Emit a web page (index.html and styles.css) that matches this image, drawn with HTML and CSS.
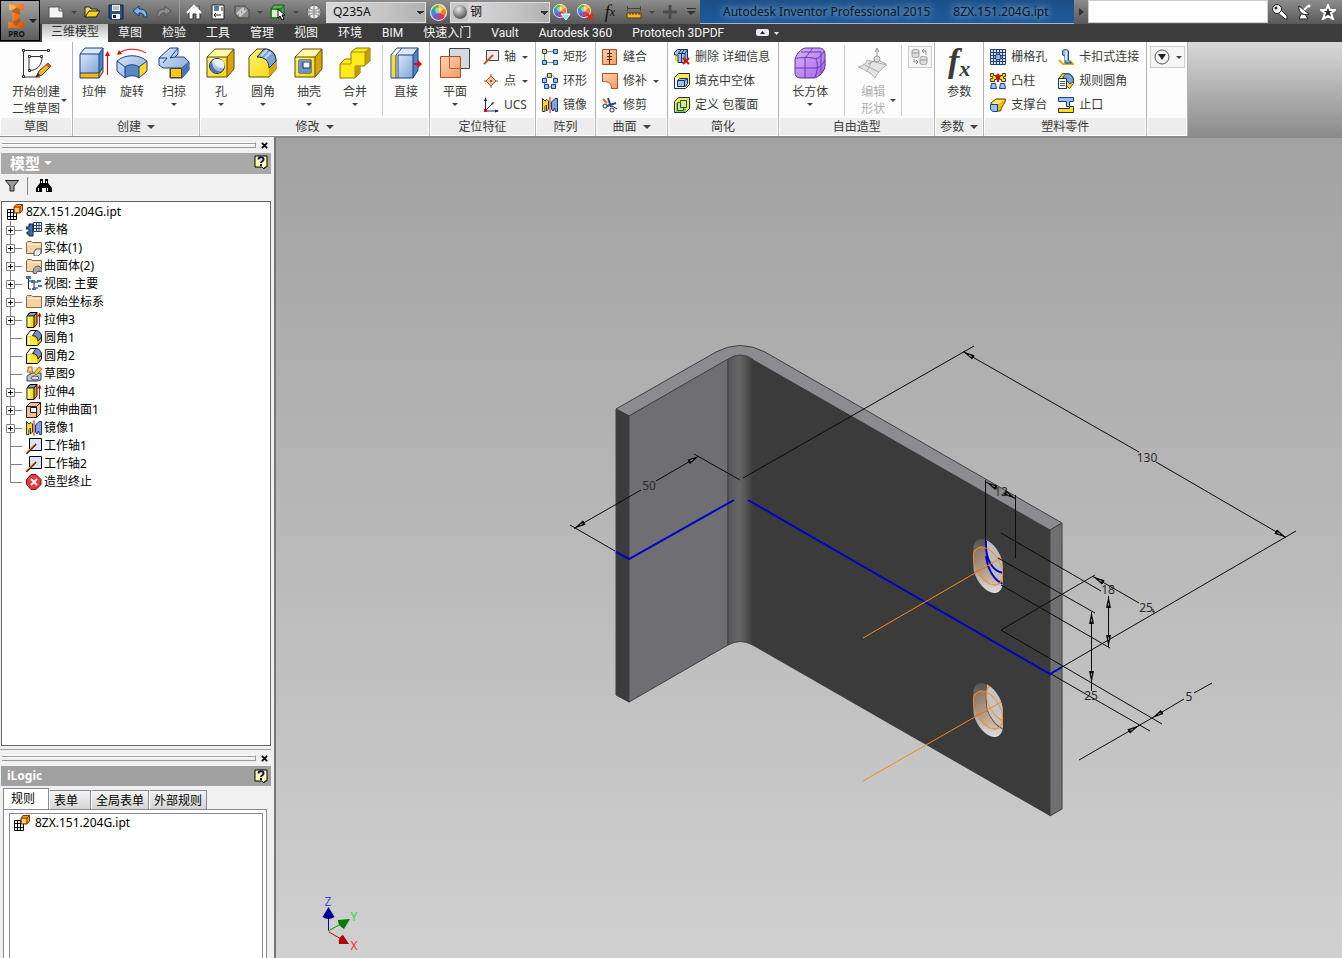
FILE: index.html
```html
<!DOCTYPE html>
<html lang="zh-CN">
<head>
    <meta charset="utf-8">
    <title>Autodesk Inventor Professional 2015</title>
    <link rel="stylesheet" href="styles.css">
</head>
<body>
<!-- Shared gradients and symbols -->
<svg class="defs" width="0" height="0" aria-hidden="true">
    <defs>
        <linearGradient id="gBlue" x1="0" y1="0" x2="1" y2="1"><stop offset="0" stop-color="#dbe8f8"/><stop offset="1" stop-color="#7ea3d6"/></linearGradient>
        <linearGradient id="gYel" x1="0" y1="0" x2="1" y2="1"><stop offset="0" stop-color="#fff27a"/><stop offset="1" stop-color="#f8d800"/></linearGradient>
        <linearGradient id="gOrange" x1="0" y1="0" x2="1" y2="1"><stop offset="0" stop-color="#fdd3b4"/><stop offset="1" stop-color="#f79a62"/></linearGradient>
        <linearGradient id="gLogo" x1="0" y1="0" x2="1" y2="1"><stop offset="0" stop-color="#f9a24a"/><stop offset="1" stop-color="#d2560c"/></linearGradient>
        <radialGradient id="gBall" cx=".4" cy=".3" r=".7"><stop offset="0" stop-color="#e8e8e8"/><stop offset="1" stop-color="#555"/></radialGradient>
        <linearGradient id="gPurple" x1="0" y1="0" x2="1" y2="1"><stop offset="0" stop-color="#d9b8ff"/><stop offset="1" stop-color="#a263ec"/></linearGradient>
    </defs>
    <symbol id="cube" viewBox="0 0 32 32">
        <path d="M2 10 10 2h19l-7 8z" fill="#fff9a8"/><path d="M22 10l7-8v20l-7 8z" fill="#d6a50c"/><path d="M2 10h20v20H2z" fill="url(#gYel)"/>
        <path d="M2 10 10 2h19v20l-7 8H2zM2 10h20v20M22 10l7-8" fill="none" stroke="#5c4a10"/>
    </symbol>
    <symbol id="part" viewBox="0 0 16 16">
        <path d="M1 6h9v9H1z" fill="#fff"/><path d="M.5 5.500h9v10h-9zM1 8.500h9M1 12.500h9M3.500 6v9M6.500 6v9" fill="none" stroke="#000"/>
        <path d="M7 3l2-2.500h6.500V6L13 9H7z" fill="#f6a21c" stroke="#8a2f00"/><path d="M7 3h6v6M13 3l2.500-2.500" fill="none" stroke="#8a2f00"/><path d="M8 4h4v4H8z" fill="#ffd27a"/>
    </symbol>
    <symbol id="extr" viewBox="0 0 16 16">
        <path d="M1 4l3-3.500h7V12l-3 3.500H1z" fill="#d8a800" stroke="#000"/><path d="M4 .5h7L8 4H1z" fill="#7a9cc8" stroke="#000"/><path d="M1.500 4.500H8V15H1.500z" fill="#ffe21c"/><path d="M8 4v11" stroke="#000"/><path d="M2 5h2v9H2z" fill="#fff6a0"/>
        <path d="M13.500 15V3" stroke="#c00"/><path d="M11.500 4.500h4l-2-4z" fill="#c00"/>
    </symbol>
    <symbol id="fil" viewBox="0 0 16 16">
        <path d="M.5 6l4-5.500h6l5 4.500v6l-4 4.500H.5z" fill="#e8c000" stroke="#000"/><path d="M1 6l4-5h5L7 5.500z" fill="#fff"/><path d="M6.500 5.500L10 .5c3 0 5.500 3 5.500 6.500L12 11c0-3-2-5.500-5.500-5.500z" fill="#6f93c4" stroke="#222"/><path d="M1 6.500h5.500L11 10v5H1z" fill="#ffe835"/><path d="M2 7h2v7H2z" fill="#fff8a8"/>
    </symbol>
    <symbol id="mir" viewBox="0 0 16 16">
        <path d="M.5 1.500L3 4l2-1.500L6.500 4v8l-2 2V8L3 9.500v5H.5z" fill="#ffdc1c" stroke="#333"/><path d="M15.500 1.500H13L9.500 5v7l1.500 2 1.500-3 1 3.500h2z" fill="#7fa3d8" stroke="#123a78"/><path d="M8 0v16" stroke="#e00"/>
    </symbol>
    <symbol id="axis" viewBox="0 0 16 16">
        <path d="M3.500.5h12v12h-12z" fill="#d8e6f6" stroke="#000"/><path d="M0 16 10 6" stroke="#6b2a00" stroke-width="2"/><path d="M0 15 9 6" stroke="#f98b2f"/>
    </symbol>
    <symbol id="folder" viewBox="0 0 16 16">
        <path d="M.5 2.500l1-1h4l1 1h9v11H.5z" fill="#f4d3a4" stroke="#8a6a3a"/><path d="M1 4.500h14" stroke="#fff0d8"/>
    </symbol>
    <symbol id="wheel" viewBox="0 0 16 16">
        <path d="M8 8V0a8 8 0 0 1 7 4z" fill="#f7c531"/><path d="M8 8l7-4a8 8 0 0 1 0 8z" fill="#f07a2a"/><path d="M8 8l7 4a8 8 0 0 1-7 4z" fill="#d8365c"/><path d="M8 8v8a8 8 0 0 1-7-4z" fill="#7b56c8"/><path d="M8 8l-7 4a8 8 0 0 1 0-8z" fill="#3b8de0"/><path d="M8 8L1 4a8 8 0 0 1 7-4z" fill="#58b84a"/>
        <circle cx="8" cy="8" r="7.500" fill="none" stroke="#e8e8f0"/><circle cx="8" cy="6" r="3" fill="#fff" opacity=".45"/>
    </symbol>
    <symbol id="help" viewBox="0 0 14 15">
        <path d="M1 1h12v11h-2l-1 2-2-2H1z" fill="#ffffb0" stroke="#000"/><path d="M4.500 4.500c0-3 5-3 5 0 0 2-2.500 1.500-2.500 3.500M7 9v2" fill="none" stroke="#101060" stroke-width="2"/>
    </symbol>
    <symbol id="close" viewBox="0 0 8 8"><path d="M1 1l6 6M7 1L1 7" stroke="#000" stroke-width="2"/></symbol>
    <symbol id="plus" viewBox="0 0 9 9"><path d="M.5.5h8v8h-8z" fill="#fff" stroke="#808080"/><path d="M2 4.500h5M4.500 2v5" stroke="#000"/></symbol>
</svg>

<div class="app">
    <header class="top">
        <button class="app-button" aria-label="应用程序菜单">
            <span class="logo">
                <svg width="20" height="26" viewBox="0 0 20 26">
                    <path d="M2 1h15v6h-4v12h4v6H1v-6h4V7H2z" fill="url(#gLogo)"/><path d="M5 7l5-3 3 3v5l-8-3zM5 19l8-4v4l-4 4z" fill="#a8440a" opacity=".6"/><path d="M2 1l8 3-5 3H2z" fill="#ffb566"/>
                </svg>
                PRO
            </span>
            <span class="caret lg"></span>
        </button>
        <div class="top-rows">
            <div class="titlebar">
                <div class="qat">
                    <button class="qi" aria-label="新建"><svg width="16" height="16" viewBox="0 0 16 16"><path d="M1 3h10l4 4v7H1z" fill="#f4f4f4" stroke="#555"/><path d="M11 3v4h4" fill="#ccc" stroke="#555"/></svg></button>
                    <button class="qc" aria-label="新建选项"><span class="caret"></span></button>
                    <button class="qi" aria-label="打开"><svg width="16" height="16" viewBox="0 0 16 16"><path d="M1 13V3h5l1 2h6v3" fill="#f8d868" stroke="#222"/><path d="M1 13l4-6h11l-4 6z" fill="#ffd21c" stroke="#222"/></svg></button>
                    <button class="qi" aria-label="保存"><svg width="16" height="16" viewBox="0 0 16 16"><path d="M1 1h14v14H2l-1-1z" fill="#2d4f8c" stroke="#0b1a3c"/><path d="M4 1h8v6H4zM4 10h8v5H4z" fill="#f2f2f2"/><path d="M5 3h6M5 5h6" stroke="#888"/><path d="M5 11h3v3H5z" fill="#222"/></svg></button>
                    <button class="qi" aria-label="放弃"><svg width="16" height="16" viewBox="0 0 16 16"><path d="M1 7l6-5v3c5 0 8 2 8 8h-3c0-3-2-4-5-4v3z" fill="#7fb4ea" stroke="#12386e"/></svg></button>
                    <button class="qi" aria-label="重做"><svg width="16" height="16" viewBox="0 0 16 16"><path d="M15 7L9 2v3C4 5 1 7 1 13h3c0-3 2-4 5-4v3z" fill="#8a8a8a" stroke="#555"/></svg></button>
                    <span class="qsep"></span>
                    <button class="qi" aria-label="主页"><svg width="16" height="16" viewBox="0 0 16 16"><path d="M3 8v7h4v-5h3v5h4V8L8 3zM11 2h2v5" fill="#fff" stroke="#333"/><path d="M1 9l7-7 7 7" fill="none" stroke="#fff" stroke-width="2"/></svg></button>
                    <button class="qi" aria-label="特性"><svg width="14" height="16" viewBox="0 0 14 16"><path d="M1 1h12v14H1z" fill="#fff" stroke="#222"/><path d="M3 2h5v5H3z" fill="#4a7fc0"/><path d="M10 4h2M10 6h2M4 11h6M3 11l2-2M3 11l2 2" stroke="#222"/></svg></button>
                    <button class="qi" aria-label="更新"><svg width="16" height="16" viewBox="0 0 16 16"><path d="M1 2h10l4 4v8H5l-4-4z" fill="#8c8c8c" stroke="#444"/><path d="M3 10l6-6M6 12l6-6M9 4v4M6 12V8" stroke="#c8c8c8" stroke-width="2"/></svg></button>
                    <button class="qc" aria-label="更新选项"><span class="caret"></span></button>
                    <button class="qi" aria-label="选择"><svg width="16" height="16" viewBox="0 0 16 16"><path d="M1 5l3-4h10v9l-3 4H1z" fill="#4fb84a" stroke="#1c5a18"/><path d="M2 6h8v7H2z" fill="#d8f0d0"/><path d="M1 5h10l3-4M11 5v9" fill="none" stroke="#1c5a18"/><path d="M8 5v9l2-2 2 4 2-1-2-4h3z" fill="#fff" stroke="#000"/></svg></button>
                    <button class="qc" aria-label="选择选项"><span class="caret"></span></button>
                    <button class="qi" aria-label="材料浏览器"><svg width="16" height="16" viewBox="0 0 16 16"><circle cx="8" cy="8" r="7" fill="#e8e8e8" stroke="#555"/><path d="M8 1v14M1 8h14M3 4c4 3 6 3 10 0M3 12c4-3 6-3 10 0M5 2c-3 4-3 8 0 12M11 2c3 4 3 8 0 12" fill="none" stroke="#888"/></svg></button>
                    <select class="combo" aria-label="材料"><option>Q235A</option></select>
                    <button class="qi" aria-label="外观浏览器"><svg width="17" height="17"><use href="#wheel"/></svg></button>
                    <div class="combo-wrap"><svg width="16" height="16" viewBox="0 0 16 16"><path d="M0 0h16v16H0z" fill="#c9c9c9"/><circle cx="8" cy="8" r="7" fill="url(#gBall)"/></svg><select class="combo" aria-label="外观"><option>钢</option></select></div>
                    <button class="qi" aria-label="调整外观"><svg width="18" height="17" viewBox="0 0 18 17"><use href="#wheel" width="14" height="14"/><path d="M8 10h9l-4 6z" fill="#7fe0ff" stroke="#fff"/></svg></button>
                    <button class="qi" aria-label="清除外观"><svg width="18" height="17" viewBox="0 0 18 17"><use href="#wheel" width="14" height="14"/><path d="M10 10l6 6M16 10l-6 6" stroke="#e02818" stroke-width="2"/></svg></button>
                    <button class="qi qfx" aria-label="参数">f<sub>x</sub></button>
                    <button class="qi" aria-label="测量"><svg width="16" height="14" viewBox="0 0 16 14"><path d="M1 3.500h14M1.500 1v5M14.500 1v5" stroke="#444"/><path d="M1 8h14v5H1z" fill="#f6b72c" stroke="#5c3a00"/><path d="M4 8v2M7 8v2M10 8v2M13 8v2" stroke="#5c3a00"/></svg></button>
                    <button class="qc" aria-label="测量选项"><span class="caret"></span></button>
                    <button class="qi" aria-label="添加"><svg width="16" height="16" viewBox="0 0 16 16"><path d="M8 1v14M1 8h14" stroke="#4c4c4c" stroke-width="3"/></svg></button>
                    <button class="qc more" aria-label="自定义快速访问工具栏"><svg width="9" height="8" viewBox="0 0 9 8"><path d="M0 .5h9" stroke="#333"/><path d="M0 3h9L4 7z" fill="#333"/></svg></button>
                </div>
                <div class="title"><span>Autodesk Inventor Professional 2015</span><span>8ZX.151.204G.ipt</span></div>
                <button class="expand" aria-label="展开"><svg width="5" height="8" viewBox="0 0 5 8"><path d="M0 0l5 4-5 4z" fill="#333"/></svg></button>
                <input class="search" type="text" aria-label="搜索帮助">
                <div class="infocenter">
                    <button class="qi" aria-label="登录"><svg width="16" height="16" viewBox="0 0 16 16"><path d="M5 8l8 7h2v-3L8 5z" fill="#fff" stroke="#222"/><circle cx="5" cy="5" r="4.500" fill="#f4f4f4" stroke="#222"/><circle cx="4" cy="4" r="1.500" fill="#333"/></svg></button>
                    <button class="qi" aria-label="通讯中心"><svg width="16" height="16" viewBox="0 0 16 16"><path d="M5 10l-2 5h9l-3-5z" fill="#fff" stroke="#222"/><path d="M3 2c-1 6 4 10 10 8z" fill="#fff" stroke="#222"/><path d="M8 6l4-4" stroke="#fff" stroke-width="2"/><circle cx="13" cy="2" r="1.500" fill="#fff"/></svg></button>
                    <button class="qi" aria-label="收藏夹"><svg width="16" height="16" viewBox="0 0 16 16"><path d="M8 1l2 5h5l-4 3 2 6-5-3-5 3 2-6-4-3h5z" fill="#333" stroke="#fff" stroke-width="2"/></svg></button>
                </div>
            </div>
            <nav class="tabs">
                <a class="tab active" href="#">三维模型</a><a class="tab" href="#">草图</a><a class="tab" href="#">检验</a><a class="tab" href="#">工具</a><a class="tab" href="#">管理</a><a class="tab" href="#">视图</a><a class="tab" href="#">环境</a><a class="tab" href="#">BIM</a><a class="tab" href="#">快速入门</a><a class="tab" href="#">Vault</a><a class="tab" href="#">Autodesk 360</a><a class="tab" href="#">Prototech 3DPDF</a>
                <button class="tab-min" aria-label="最小化功能区"><svg width="24" height="8" viewBox="0 0 24 8"><rect width="13" height="7" rx="2" fill="#e8e8f4"/><path d="M4 5h5L6.500 2z" fill="#222"/><path d="M18 3h5l-2.500 3z" fill="#e8e8f4"/></svg></button>
            </nav>
        </div>
    </header>

    <div class="ribbon">
        <section class="panel">
            <div class="panel-body">
                <button class="big w72"><svg width="32" height="32" viewBox="0 0 32 32"><path d="M29 3.500H3.500V30H20M9 9.500h13c0 8-4 14-13 14z" fill="none" stroke="#333"/><path d="M2.500 2.500h2v2h-2zM27.500 2.500h2v2h-2zM2.500 28.500h2v2h-2zM8.500 8.500h2v2h-2zM20.500 8.500h2v2h-2zM8.500 22.500h2v2h-2z" fill="#fff" stroke="#333"/><path d="M16 30l3-6 9-8 3 3-9 9z" fill="#f6b52c" stroke="#5a3a10"/><path d="M26 18l3 3 2-2-3-3z" fill="#c65a2c"/><path d="M16 30l2-4 2 2z" fill="#222"/></svg><span>开始创建<br>二维草图</span><i class="caret side"></i></button>
            </div>
            <h2>草图</h2>
        </section>
        <section class="panel">
            <div class="panel-body pad2">
                <button class="big w38"><svg width="32" height="32" viewBox="0 0 32 32"><path d="M2 7l5-6h18l-4 6z" fill="#dce8f6"/><path d="M21 7l4-6v24l-4 5z" fill="#5580c0"/><path d="M2 7h19v20H2z" fill="url(#gBlue)"/><path d="M2 26h19l4-6v5l-4 6H2z" fill="#f6b800"/><path d="M2 7l5-6h18v24l-4 6H2zM2 7h19v24M21 7l4-6M2 26h19l4-6" fill="none" stroke="#17408c"/><path d="M29.500 28V8" stroke="#e00"/><path d="M27 9h5l-2.500-5z" fill="#e00"/></svg><span>拉伸</span></button>
                <button class="big w38"><svg width="32" height="32" viewBox="0 0 32 32"><path d="M1 14c8-7 22-7 30 0v10l-8 7c-4-3-10-3-14 0l-8-7z" fill="url(#gBlue)"/><path d="M9 20c4-3 10-3 14 0v11c-4-3-10-3-14 0z" fill="#5c86c4"/><path d="M23 20l8-6v10l-8 7z" fill="#ffdc1c"/><path d="M1 14c8-7 22-7 30 0v10l-8 7c-4-3-10-3-14 0l-8-7zl8 6c4-3 10-3 14 0l8-6M9 20v11M23 20v11" fill="none" stroke="#17408c"/><path d="M30 6C22 1 10 1 3 6" fill="none" stroke="#e00"/><path d="M1 8l2-5 3 4z" fill="#e00"/></svg><span>旋转</span></button>
                <button class="big w46"><svg width="32" height="32" viewBox="0 0 32 32"><path d="M1 11L12 1h8v6l-3 3h9l5 5v8l-7 8H12V21H5l-4-3z" fill="url(#gBlue)" stroke="#17408c"/><path d="M1 11h8l-4 5M20 1l-8 10 5-1M12 21h12l7-6" fill="none" stroke="#17408c"/><path d="M24 21l7-6v8l-7 8z" fill="#4a74b4"/><path d="M12.500 21.500h11v9h-11z" fill="#f9c818" stroke="#5a4200"/></svg><span>扫掠</span><i class="caret"></i></button>
            </div>
            <h2>创建 <i class="caret lg"></i></h2>
        </section>
        <section class="panel">
            <div class="panel-body">
                <button class="big w42"><svg width="32" height="32" viewBox="0 0 32 32"><use href="#cube" width="32" height="32"/><circle cx="12" cy="19" r="7.500" fill="url(#gBlue)" stroke="#17305c"/><path d="M8 13c2 6 6 9 11 8 2-5-1-9-6-9-2 0-4 0-5 1z" fill="#e8f0fc"/><path d="M7 14c0 7 5 12 10 10-6 4-13 1-12-6z" fill="#4a74b4"/></svg><span>孔</span><i class="caret"></i></button>
                <button class="big w42"><svg width="32" height="32" viewBox="0 0 32 32"><path d="M2 10l8-8h8c7 0 11 5 11 12v8l-7 8H2z" fill="url(#gYel)" stroke="#5c4a10"/><path d="M22 21l7-7v8l-7 8z" fill="#d6a50c"/><path d="M10 10l7-8c7 0 12 5 12 12l-7 7c0-7-4-11-12-11z" fill="#7fa3d8" stroke="#17305c"/><path d="M14 9l6-6M18 11l6-6" stroke="#c4d8f4" stroke-width="2"/></svg><span>圆角</span><i class="caret"></i></button>
                <button class="big w50"><svg width="32" height="32" viewBox="0 0 32 32"><use href="#cube" width="32" height="32"/><path d="M6 13h12v13H6z" fill="#dfeafa" stroke="#17305c"/><path d="M6 26l4-5v-8H6zM6 26l4-5h8v5z" fill="#6a92cc"/><path d="M10 15h7v6h-7z" fill="#f4f8ff" stroke="#17305c"/></svg><span>抽壳</span><i class="caret"></i></button>
                <button class="big w42"><svg width="32" height="32" viewBox="0 0 32 32"><path d="M12 5l5-4h14v13l-6 5h-4v7l-5 5H1V17l5-5h6z" fill="#ffea1c" stroke="#8a7400"/><path d="M26 5l5-4v13l-5 4zM16 19h5v7l-5 5z" fill="#c09c08"/><path d="M12 5h14v13M26 5l5-4M1 17h11v-5M16 31V19h5" fill="none" stroke="#a88c00"/></svg><span>合并</span><i class="caret"></i></button>
                <span class="vsep"></span>
                <button class="big w46"><svg width="32" height="32" viewBox="0 0 32 32"><path d="M8 8l6-7h14l-5 7z" fill="#dce8f6"/><path d="M23 8l5-7v22l-5 8z" fill="#5580c0"/><path d="M8 8h15v23H8z" fill="url(#gBlue)"/><path d="M2 8h4v23H2z" fill="#ffdc1c"/><path d="M1 8l6-7h21v22l-5 8H1zM6 8v23M8 8v23M6 8l6-7M8 8h15v23M23 8l5-7" fill="none" stroke="#17408c"/><path d="M24 17h4" stroke="#e00" stroke-width="2"/><path d="M28 13v8l4-4z" fill="#e00"/></svg><span>直接</span></button>
            </div>
            <h2>修改 <i class="caret lg"></i></h2>
        </section>
        <section class="panel">
            <div class="panel-body">
                <button class="big w50"><svg width="32" height="32" viewBox="0 0 32 32"><path d="M10.500 1.500h20v20h-20z" fill="#d4d8e0" stroke="#444"/><path d="M1.500 9.500h20v21h-20z" fill="url(#gOrange)" stroke="#b05020"/><path d="M10.500 10v11.500H21" fill="none" stroke="#a06848"/></svg><span>平面</span><i class="caret"></i></button>
                <div class="stack">
                    <button class="small"><svg width="16" height="16" viewBox="0 0 16 16"><path d="M3.500 1.500h12v10h-12z" fill="#e8eaf0" stroke="#444"/><path d="M1 15l9-9" stroke="#c05a20" stroke-width="2"/></svg><span>轴</span><i class="caret"></i></button>
                    <button class="small"><svg width="16" height="16" viewBox="0 0 16 16"><path d="M8 3l5 5-5 5-5-5z" fill="#f8c09a" stroke="#a85020"/><path d="M8 1v3M8 12v3M1 8h3M12 8h3" stroke="#a85020"/><circle cx="8" cy="8" r="1" fill="#333"/></svg><span>点</span><i class="caret"></i></button>
                    <button class="small"><svg width="16" height="16" viewBox="0 0 16 16"><path d="M2.500 1v13H15M3 13l6-6" fill="none" stroke="#17305c"/><path d="M1 4l1.500-4L4 4zM12 12.500l4 1.500-4 1.500zM8 6l3-1-1 3z" fill="#17305c"/><path d="M1 12h3v3H1z" fill="#e00"/></svg><span>UCS</span></button>
                </div>
            </div>
            <h2>定位特征</h2>
        </section>
        <section class="panel">
            <div class="panel-body pad6">
                <div class="stack">
                    <button class="small"><svg width="16" height="16" viewBox="0 0 16 16"><path d="M2.500 2.500h11M2.500 3v10.500h11" fill="none" stroke="#888"/><path d="M.5.5h4v4h-4z" fill="#ffdc1c" stroke="#17408c"/><path d="M11.500.5h4v4h-4zM.5 11.500h4v4h-4zM11.500 11.500h4v4h-4z" fill="#9cc0f0" stroke="#17408c"/></svg><span>矩形</span></button>
                    <button class="small"><svg width="16" height="16" viewBox="0 0 16 16"><circle cx="8" cy="8" r="6" fill="none" stroke="#888"/><path d="M5.500.5h4v4h-4z" fill="#ffdc1c" stroke="#17408c"/><path d="M.5 5.500h4v4h-4zM11.500 5.500h4v4h-4zM2.500 11.500h4v4h-4zM9.500 11.500h4v4h-4z" fill="#9cc0f0" stroke="#17408c"/></svg><span>环形</span></button>
                    <button class="small"><svg width="16" height="16"><use href="#mir"/></svg><span>镜像</span></button>
                </div>
            </div>
            <h2>阵列</h2>
        </section>
        <section class="panel">
            <div class="panel-body pad6">
                <div class="stack">
                    <button class="small"><svg width="16" height="16" viewBox="0 0 16 16"><path d="M.5.5h14v15H.5z" fill="url(#gOrange)" stroke="#a85020"/><path d="M7.500 1v14M5 4.500h5M5 7.500h5M5 10.500h5" stroke="#5a2a10"/></svg><span>缝合</span></button>
                    <button class="small"><svg width="16" height="16" viewBox="0 0 16 16"><path d="M.5.5h15v15h-6c0-5-2-7-9-7z" fill="url(#gOrange)" stroke="#a85020"/></svg><span>修补</span><i class="caret"></i></button>
                    <button class="small"><svg width="16" height="16" viewBox="0 0 16 16"><path d="M6 1l3 9M14 6L5 9" stroke="#27487c" stroke-width="2"/><circle cx="3" cy="9" r="2" fill="none" stroke="#17305c"/><circle cx="10" cy="13" r="2" fill="none" stroke="#17305c"/><path d="M1 2l4 4" stroke="#e06a20" stroke-width="2"/><path d="M10 9l5 3" stroke="#17305c"/></svg><span>修剪</span></button>
                </div>
            </div>
            <h2>曲面 <i class="caret lg"></i></h2>
        </section>
        <section class="panel">
            <div class="panel-body pad6">
                <div class="stack">
                    <button class="small"><svg width="16" height="16" viewBox="0 0 16 16"><path d="M.5 3.500l3-3h10v9l-3 4H4V6H.5z" fill="#9cc0f0" stroke="#17305c"/><path d="M4 4.500h7v9M11 4.500l2.500-4M7 1L4.500 4.500M10 1L7.500 4.500M7.500 5v8" fill="none" stroke="#17305c"/><path d="M1 7h2v5H1z" fill="#f6d400"/><path d="M9 9l6 6M15 9l-6 6" stroke="#d01010" stroke-width="2"/></svg><span>删除 详细信息</span></button>
                    <button class="small"><svg width="16" height="16" viewBox="0 0 16 16"><path d="M.5 4.500l4-4h11v11l-4 4H.5z" fill="#ffe84a" stroke="#17305c"/><path d="M1 5h11v10H1z" fill="#fffbd0"/><path d="M3.500 7.500l2-2h8v5l-2 3h-8z" fill="#9cc0f0" stroke="#17305c"/><path d="M3.500 7.500h7v6M10.500 7.500l3-2" fill="none" stroke="#17305c"/></svg><span>填充中空体</span></button>
                    <button class="small"><svg width="16" height="16" viewBox="0 0 16 16"><path d="M.5 4.500l4-4h11v11l-4 4H.5z" fill="#ffe84a" stroke="#17305c"/><path d="M2 6h10v9H2z" fill="#8cc860"/><path d="M3.500 13.500v-8h3v-2h6v7h-3v3z" fill="#c8e8a8" stroke="#2a5a10"/><path d="M6.500 6v4.500h3" fill="none" stroke="#2a5a10"/></svg><span>定义 包覆面</span></button>
                </div>
            </div>
            <h2>简化</h2>
        </section>
        <section class="panel">
            <div class="panel-body">
                <button class="big w62"><svg width="32" height="32" viewBox="0 0 32 32"><path d="M1 13C1 9 7 1 12 1h13c4 0 6 3 6 6v12c0 5-7 12-11 12H7c-4 0-6-2-6-6z" fill="url(#gPurple)" stroke="#5c2c94"/><path d="M1 12c3-2 18-2 21 0 2 3 2 15-2 19M22 12c3-1 7-5 8-8M11 11v20M1 21h22c3-1 7-5 8-8M11 11l8-10M7 5h20v21" fill="none" stroke="#6b3aa8"/></svg><span>长方体</span><i class="caret"></i></button>
                <span class="vsep"></span>
                <button class="big w56" disabled><svg width="32" height="32" viewBox="0 0 32 32"><path d="M1 20c6-1 8-4 9-7l20 5c-4 2-8 6-12 13-4-5-9-8-17-11z" fill="#e4e4e4" stroke="#aaa"/><path d="M6 17l16 8M14 14c-1 6-4 9-5 11" fill="none" stroke="#aaa"/><path d="M20 12V2M17 14l-6 3M23 14l6 3M18 5l2-4 2 4" fill="none" stroke="#999"/><circle cx="20" cy="12" r="3" fill="#ddd" stroke="#999"/></svg><span>编辑<br>形状</span><i class="caret side"></i></button>
                <span class="vsep"></span>
                <button class="boxed" aria-label="转换" disabled><svg width="18" height="18" viewBox="0 0 18 18"><path d="M1 3c0-2 7-2 7 0v5c0 2-7 2-7 0zM9 10c0-2 7-2 7 0v5c0 2-7 2-7 0zM1 5h7M9 12h7" fill="#ddd" stroke="#999"/><path d="M11 3h4v4M13 1l-2 2 2 2M6 14H3v-3M5 12l2 2-2 2" fill="none" stroke="#888"/></svg></button>
            </div>
            <h2>自由造型</h2>
        </section>
        <section class="panel">
            <div class="panel-body">
                <button class="big w48"><b class="fx">f<sub>x</sub></b><span>参数</span></button>
            </div>
            <h2>参数 <i class="caret lg"></i></h2>
        </section>
        <section class="panel">
            <div class="panel-body pad6">
                <div class="stack">
                    <button class="small"><svg width="16" height="16" viewBox="0 0 16 16"><path d="M1 1h14v14H1z" fill="#d4e2f6"/><path d="M.5.5h15v15H.5zM3.500 0v16M6.500 0v16M9.500 0v16M12.500 0v16M0 3.500h16M0 6.500h16M0 9.500h16M0 12.500h16" fill="none" stroke="#27406c"/><circle cx="8" cy="8" r="3" fill="#8ab0e4" stroke="#17305c"/></svg><span>栅格孔</span></button>
                    <button class="small"><svg width="16" height="16" viewBox="0 0 16 16"><path d="M.5.5h3v2h3v4h-2v2h-4v-3h2v-2h-2zM15.500.5h-3v2h-3v4h2v2h4v-3h-2v-2h2z" fill="#ffdc1c" stroke="#4a3a00"/><path d="M.5 15.500l1-5h4l1 5zM9.500 15.500l1-5h4l1 5z" fill="#9cc0f0" stroke="#17408c"/><path d="M8 9V3" stroke="#e00" stroke-width="2"/><path d="M5 4h6L8 0z" fill="#e00"/></svg><span>凸柱</span></button>
                    <button class="small"><svg width="16" height="16" viewBox="0 0 16 16"><path d="M1 6l5-4h9.500c0 5-3 5-5 12H6V9H1z" fill="#f6b800" stroke="#5a4200"/><path d="M2 6l4-3h8l-5 4H3z" fill="#ffe870"/><path d="M.5 7.500h7v7H3l-2.500-2z" fill="#9cc0f0" stroke="#17408c"/></svg><span>支撑台</span></button>
                </div>
                <div class="stack next">
                    <button class="small"><svg width="16" height="16" viewBox="0 0 16 16"><path d="M1 11l4 4h10l-3-3" fill="none" stroke="#e0b000" stroke-width="2"/><path d="M4.500 3c0-3.500 6-3.500 6 0v8l3 3H7V7L4.500 6z" fill="#8ab0e4" stroke="#17408c"/><path d="M8 2v9" stroke="#dce8f6" stroke-width="2"/></svg><span>卡扣式连接</span></button>
                    <button class="small"><svg width="16" height="16" viewBox="0 0 16 16"><path d="M.5 6l4-5.500H9c4 0 6.500 3 6.500 7v3l-4 5z" fill="#ffdc1c" stroke="#5a4200"/><path d="M5 4l3-3.500c5 0 7.500 3.500 7.500 8L12 11z" fill="#7fa3d8" stroke="#17408c"/><path d="M.5 5.500h8v10h-8z" fill="#f4f8ff" stroke="#17305c"/><path d="M2 8.500h5M2 10.500h5M2 12.500h5" stroke="#555"/></svg><span>规则圆角</span></button>
                    <button class="small"><svg width="16" height="16" viewBox="0 0 16 16"><path d="M.5.5h15v4h-4v5h-3v-5h-8z" fill="#9cc0f0" stroke="#17408c"/><path d="M.5 11.500h11v-2h4v6H.5z" fill="#ffdc1c" stroke="#333"/></svg><span>止口</span></button>
                </div>
            </div>
            <h2>塑料零件</h2>
        </section>
        <section class="panel">
            <div class="panel-body">
                <button class="boxed wide" aria-label="转换选项"><svg width="16" height="16" viewBox="0 0 16 16"><circle cx="8" cy="8" r="7" fill="#f4f4f4" stroke="#555"/><path d="M4 5h8l-4 6z" fill="#223"/></svg><i class="caret"></i></button>
            </div>
            <h2></h2>
        </section>
    </div>

    <main class="work">
        <aside class="sidebar">
            <section class="dock model">
                <div class="grip"><span></span><button aria-label="关闭"><svg width="7" height="7"><use href="#close"/></svg></button></div>
                <div class="dock-title"><button class="browser-menu">模型 <i class="caret white"></i></button><button aria-label="帮助"><svg width="14" height="15"><use href="#help"/></svg></button></div>
                <div class="tools">
                    <button aria-label="过滤器"><svg width="14" height="13" viewBox="0 0 14 13"><path d="M.5 1.500h13L9 7v5H5V7z" fill="#999" stroke="#222"/></svg></button>
                    <span></span>
                    <button aria-label="查找"><svg width="16" height="14" viewBox="0 0 16 14"><path d="M4 0h3v4h2V0h3v4l4 5v4h-6V9H6v4H0V9l4-5z" fill="#000"/><path d="M2.500 9v3M5.500 2v2M11.500 9v3M10.500 2v2" stroke="#fff"/></svg></button>
                </div>
                <ul class="tree">
                    <li class="root"><svg width="16" height="16"><use href="#part"/></svg>8ZX.151.204G.ipt</li>
                    <li><span class="twig"><button aria-label="展开"><svg width="9" height="9"><use href="#plus"/></svg></button></span><svg width="16" height="16" viewBox="0 0 16 16"><path d="M8 1h8v9H8z" fill="#fff"/><path d="M7.500.5h8v9h-8zM7 3.500h9M7 6.500h9M10.500 1v9M13 1v9" fill="none" stroke="#27406c"/><path d="M3 2h4v12H3v-2H1v-2h2V7H0V5h3z" fill="#3c70b0" stroke="#123"/></svg>表格</li>
                    <li><span class="twig"><button aria-label="展开"><svg width="9" height="9"><use href="#plus"/></svg></button></span><svg width="16" height="16" viewBox="0 0 16 16"><use href="#folder"/><path d="M8 12l2-3h5v4l-3 3H8z" fill="#e4eaf2" stroke="#555"/></svg>实体(1)</li>
                    <li><span class="twig"><button aria-label="展开"><svg width="9" height="9"><use href="#plus"/></svg></button></span><svg width="16" height="16" viewBox="0 0 16 16"><use href="#folder"/><path d="M7 15c0-5 2-7 6-7l3 3v3c-4-2-5-1-6 2z" fill="#a8acb4" stroke="#555"/></svg>曲面体(2)</li>
                    <li><span class="twig"><button aria-label="展开"><svg width="9" height="9"><use href="#plus"/></svg></button></span><svg width="16" height="16" viewBox="0 0 16 16"><path d="M2.500 3v10H5M2.500 5H6M8 6v6h4M9 6h3" fill="none" stroke="#222"/><path d="M0 0h5v3H0zM5 4h4v3H5zM11 4h4v2h-4zM12 9h4v2h-4zM6 12h4v2H6z" fill="#3c70b0"/></svg>视图: 主要</li>
                    <li><span class="twig"><button aria-label="展开"><svg width="9" height="9"><use href="#plus"/></svg></button></span><svg width="16" height="16"><use href="#folder"/></svg>原始坐标系</li>
                    <li><span class="twig"><button aria-label="展开"><svg width="9" height="9"><use href="#plus"/></svg></button></span><svg width="16" height="16"><use href="#extr"/></svg>拉伸3</li>
                    <li><span class="twig"></span><svg width="16" height="16"><use href="#fil"/></svg>圆角1</li>
                    <li><span class="twig"></span><svg width="16" height="16"><use href="#fil"/></svg>圆角2</li>
                    <li><span class="twig"></span><svg width="16" height="16" viewBox="0 0 16 16"><path d="M6 1h10v9H6z" fill="#dde6f2"/><path d="M1 10l5-3h9v7l-4 1H1z" fill="#b8c4dc" stroke="#345"/><path d="M8 7l5-6 3 2-6 6z" fill="#f6c81c" stroke="#a87800"/><path d="M2 1h4v3l1 2H1l1-2zM4 6v3" fill="#ffd8a0" stroke="#c05a10"/><ellipse cx="9" cy="12" rx="4" ry="2" fill="#ddd" stroke="#456"/></svg>草图9</li>
                    <li><span class="twig"><button aria-label="展开"><svg width="9" height="9"><use href="#plus"/></svg></button></span><svg width="16" height="16"><use href="#extr"/></svg>拉伸4</li>
                    <li><span class="twig"><button aria-label="展开"><svg width="9" height="9"><use href="#plus"/></svg></button></span><svg width="16" height="16" viewBox="0 0 16 16"><path d="M.5 4.500l4-4h10v11l-4 4H.5z" fill="#f8c09a" stroke="#222"/><path d="M4.500 5.500h6v5h-6z" fill="#fff" stroke="#222"/><path d="M.5 4.500h10v11M10.500 4.500l4-4" fill="none" stroke="#222"/></svg>拉伸曲面1</li>
                    <li><span class="twig"><button aria-label="展开"><svg width="9" height="9"><use href="#plus"/></svg></button></span><svg width="16" height="16"><use href="#mir"/></svg>镜像1</li>
                    <li><span class="twig"></span><svg width="16" height="16"><use href="#axis"/></svg>工作轴1</li>
                    <li><span class="twig"></span><svg width="16" height="16"><use href="#axis"/></svg>工作轴2</li>
                    <li class="last"><span class="twig"></span><svg width="16" height="16" viewBox="0 0 16 16"><path d="M5 .5h5l5 5v5l-5 5H5l-4.500-5v-5z" fill="#e83a3a" stroke="#7a1010"/><path d="M5 5l6 6M11 5l-6 6" stroke="#fff" stroke-width="2"/></svg>造型终止</li>
                </ul>
            </section>
            <section class="dock ilogic">
                <div class="grip"><span></span><button aria-label="关闭"><svg width="7" height="7"><use href="#close"/></svg></button></div>
                <div class="dock-title small-title"><span>iLogic</span><button aria-label="帮助"><svg width="14" height="15"><use href="#help"/></svg></button></div>
                <div class="rule-tabs"><button class="on">规则</button><button>表单</button><button>全局表单</button><button>外部规则</button></div>
                <div class="rule-page"><ul class="rules"><li><svg width="16" height="16"><use href="#part"/></svg>8ZX.151.204G.ipt</li></ul></div>
            </section>
        </aside>

        <div class="viewport">
            <svg class="scene" viewBox="276 138 1066 820" preserveAspectRatio="xMidYMid meet">
                <defs>
                    <linearGradient id="bend"><stop offset="0" stop-color="#58585a"/><stop offset=".45" stop-color="#666667"/><stop offset=".7" stop-color="#555"/><stop offset="1" stop-color="#3b3b3b"/></linearGradient>
                    <linearGradient id="bore" x1="0" y1="0" x2="0" y2="1"><stop offset="0" stop-color="#4c4c4e"/><stop offset=".4" stop-color="#8c8888"/><stop offset="1" stop-color="#e6e6ea"/></linearGradient>
                    <linearGradient id="tan" x1="0" y1="0" x2="1" y2="1"><stop offset="0" stop-color="#7a6858"/><stop offset="1" stop-color="#e8cdb4"/></linearGradient>
                    <clipPath id="slot"><rect x="-17" y="-25" width="34" height="50" rx="17" transform="matrix(.866 .5 0 1 0 0)"/></clipPath>
                    <marker id="tip" viewBox="0 0 12 6" refX="12" refY="3" markerWidth="12" markerHeight="6" markerUnits="userSpaceOnUse" orient="auto-start-reverse"><path d="M0 .5L12 3 0 5.500z" fill="#0a0a0a"/><path d="M2 3h3" stroke="#888"/></marker>
                </defs>

                <!-- bracket -->
                <g stroke="#404044" stroke-width="1" stroke-linejoin="round">
                    <path d="M616 409L716 352Q740 339 765 352L1062 523 1050 530 753 360Q740 351 728 360L629 416z" fill="#8c8b90"/>
                    <path d="M616 409l13 7v286l-13-7z" fill="#3b3b3b"/>
                    <path d="M629 416l99-57v286l-99 57z" fill="#6f6e73"/>
                    <path d="M1050 530l12-7v286l-12 7z" fill="#706f74"/>
                </g>
                <path d="M752 359L1050 530v286L752 645z" fill="#3b3b3b"/>
                <path d="M728 359.500Q740 351 753 359.500V645Q740 638 728 645z" fill="url(#bend)"/>
                <path d="M728 359v286Q740 638 753 645M728 359Q740 351 753 359" fill="none" stroke="#404044"/>

                <!-- slotted holes -->
                <g transform="translate(988 566)">
                    <g clip-path="url(#slot)">
                        <path d="M-20-30h40v60h-40z" fill="url(#bore)"/>
                        <circle r="17" transform="matrix(.866 .5 0 1 0 0)" fill="url(#tan)"/>
                        <path d="M-20-14l20-10M-20 10l20-10" stroke="#555"/>
                        <rect x="-17" y="-25" width="34" height="50" rx="17" transform="matrix(.866 .5 0 1 13 -7)" fill="#bdbdbd"/>
                        <path d="M-2-25C-3-6 5 6 16 7M-2-10C0 6 8 16 16 18" class="edge"/>
                    </g>
                    <circle r="17" transform="matrix(.866 .5 0 1 0 0)" class="work-axis"/>
                </g>
                <g transform="translate(988 710)">
                    <g clip-path="url(#slot)">
                        <path d="M-20-30h40v60h-40z" fill="url(#bore)"/>
                        <circle r="17" transform="matrix(.866 .5 0 1 0 0)" fill="url(#tan)"/>
                        <path d="M-20-14l20-10M-20 10l20-10" stroke="#555"/>
                        <rect x="-17" y="-25" width="34" height="50" rx="17" transform="matrix(.866 .5 0 1 13 -7)" fill="#c4c4c4" stroke="#444"/>
                        <circle r="17" transform="matrix(.866 .5 0 1 13 -7)" class="work-axis"/>
                    </g>
                    <circle r="17" transform="matrix(.866 .5 0 1 0 0)" class="work-axis"/>
                </g>
                <path d="M616 552l13 7 105-59M748 500l302 174 12-7" class="edge"/>
                <path d="M863 638l138-80M863 781l138-79" class="work-axis"/>

                <!-- dimensions -->
                <g class="dim">
                    <path d="M570 525l45 26M694 454l46 26M743 478l231-132M1062 667l234-136M985.500 480v62M1015.500 495v63M1001 533l100 58M1095 575l-94 55 161 94M998 558l97 55M1001 585l109 63M1051 674l99 57M1152 718l-14 8"/>
                    <path d="M641 490l-67 38.500" marker-end="url(#tip)"/><path d="M656 481l43-25" marker-end="url(#tip)"/>
                    <path d="M1139 452L963 351.500" marker-end="url(#tip)"/><path d="M1156 462l130 75.500" marker-end="url(#tip)"/>
                    <path d="M995 487l-9-5" marker-end="url(#tip)"/><path d="M1006 493l9 5.500" marker-end="url(#tip)"/>
                    <path d="M1139 603l-46-26.500" marker-end="url(#tip)"/>
                    <path d="M1108.500 596v51" marker-start="url(#tip)" marker-end="url(#tip)"/>
                    <path d="M1091.500 612v71" marker-start="url(#tip)" marker-end="url(#tip)"/><path d="M1091.500 683v8"/>
                    <path d="M1079 760l60-34.500" marker-end="url(#tip)"/><path d="M1184 699l-32 19" marker-end="url(#tip)"/><path d="M1194 693l18-10"/>
                    <path d="M1153 609v3h2" />
                </g>
                <g class="dim-text">
                    <text x="649" y="490">50</text><text x="1147" y="462">130</text><text x="1001" y="496">12</text><text x="1108" y="594">18</text><text x="1146" y="612">25</text><text x="1091" y="700">25</text><text x="1189" y="701">5</text>
                </g>

                <!-- axis triad -->
                <path d="M328.500 931v-14" stroke="#0000c0"/><path d="M328 931l13-7" stroke="#00a000"/><path d="M329 932l12 7" stroke="#c00000"/>
                <path d="M328.500 907l6 10q-6 4-12 0z" fill="#000090"/><path d="M350 919l-12 1q0 6 6 9z" fill="#007a00"/><path d="M349 944l-6-9q-5 2-4 9z" fill="#b00000"/>
                <g class="dim-text"><text x="328" y="906" class="z">Z</text><text x="354" y="921" class="y">Y</text><text x="354" y="950" class="x">X</text></g>
            </svg>
        </div>
    </main>
</div>
</body>
</html>
```
FILE: styles.css
```css
* { box-sizing: border-box; }
body {
    margin: 0;
    font-family: "Noto Sans", "Noto Sans CJK SC", sans-serif;
    font-size: 12px;
    line-height: 16px;
    color: #000;
    background: #f0f0f0;
}
button { padding: 0; border: 0; background: none; font: inherit; color: inherit; }
a { color: inherit; text-decoration: none; }
ul { list-style: none; margin: 0; padding: 0; }
svg { flex: none; display: block; }
.defs { position: absolute; }
.app { display: flex; flex-direction: column; height: 100vh; overflow: hidden; }

.caret { display: inline-block; flex: none; border: 3px solid transparent; border-top-color: #444; border-bottom: 0; }
.caret.lg { border-width: 4px 4px 0; }
.caret.white { border-width: 4px 4px 0; border-top-color: #fff; }

/* Title bar and tabs */
.top { display: flex; background: #3c3c3c; }
.app-button {
    display: flex;
    align-items: center;
    width: 40px;
    height: 41px;
    padding-left: 3px;
    border: 1px solid #000;
    background: linear-gradient(#a4a4a4, #5c5c5c);
}
.logo { display: flex; flex-direction: column; align-items: center; width: 25px; font-size: 8px; font-weight: bold; line-height: 10px; color: #111; }
.app-button .caret { border-top-color: #222; }
.top-rows { flex: 1; min-width: 0; }
.titlebar { display: flex; height: 24px; background: linear-gradient(#8c8c8c, #585858); }
.qat { display: flex; align-items: center; flex: none; padding-left: 4px; }
.qi { display: flex; align-items: center; justify-content: center; width: 24px; height: 24px; }
.qc { display: flex; align-items: center; justify-content: center; width: 12px; height: 24px; }
.qc.more { width: 18px; }
.qsep { width: 1px; height: 24px; margin: 0 2px 0 3px; background: #999; }
.qfx { font: italic 18px "Liberation Serif", serif; color: #111; }
.qfx sub { font-size: 12px; line-height: 8px; }
.combo {
    appearance: none;
    width: 100px;
    height: 21px;
    margin: 0;
    padding: 0 6px;
    border: 1px solid #ddd;
    border-radius: 0;
    font: inherit;
    color: #111;
    background:
        conic-gradient(from -45deg at 50% 100%, #333 90deg, transparent 0) right 1px top 8px / 8px 4px no-repeat,
        linear-gradient(90deg, #d8d8d8, #c4c4c4 60%, #b0b0b0);
}
.combo-wrap { display: flex; align-items: center; width: 100px; height: 21px; padding-left: 1px; border: 1px solid #ddd; background: #c9c9c9; }
.combo-wrap .combo { flex: 1; min-width: 0; height: 19px; padding: 0 2px; border: 0; }
.title {
    display: flex;
    flex: 1;
    gap: 23px;
    align-items: center;
    min-width: 0;
    padding: 0 23px;
    overflow: hidden;
    white-space: nowrap;
    color: #0a1420;
    text-shadow: 0 0 6px #8fb4d8, 0 0 10px #8fb4d8;
    background: linear-gradient(#1c4f88, #1d5a9a);
    border-bottom: 1px solid #9cb8d4;
}
.expand { display: flex; align-items: center; justify-content: center; width: 14px; }
.search { width: 180px; height: 23px; padding: 0 4px; border: 1px solid #ccc; background: #fff; }
.infocenter { display: flex; width: 74px; }

.tabs {
    display: flex;
    align-items: center;
    height: 18px;
    margin-left: 2px;
    font-family: Roboto, "Noto Sans CJK SC", sans-serif;
    color: #f4f4f4;
    white-space: nowrap;
}
.tab { padding: 0 10px; }
.tab.active { height: 18px; padding: 0 9px; color: #333; background: linear-gradient(#b8b8b8, #fff); }
.tab-min { margin-left: 22px; }

/* Ribbon */
.ribbon {
    display: flex;
    height: 95px;
    color: #3a3a3a;
    background: linear-gradient(#d8d8d8, #8c8c8c);
    border-bottom: 1px solid #8c8c8c;
}
.panel { display: flex; flex-direction: column; flex: none; border-right: 1px solid #b4b4b4; background: #fdfdfd; }
.panel-body { display: flex; flex: 1; min-height: 0; padding-top: 3px; }
.pad2 { padding-left: 2px; padding-right: 2px; }
.pad6 { padding-left: 6px; padding-right: 7px; }
.panel h2 {
    display: flex;
    align-items: center;
    justify-content: center;
    gap: 6px;
    flex: none;
    height: 17px;
    margin: 0 1px 1px;
    font-size: 12px;
    font-weight: normal;
    background: #ededed;
}
.big { display: flex; flex-direction: column; align-items: center; padding-top: 2px; line-height: 17px; position: relative; }
.big span { margin-top: 4px; }
.big .caret { margin-top: 3px; }
.big .side { position: absolute; right: 5px; top: 51px; }
.big:disabled { color: #b0b0b0; }
.w38 { width: 38px; }
.w42 { width: 42px; }
.w46 { width: 46px; }
.w48 { width: 48px; }
.w50 { width: 50px; }
.w56 { width: 56px; }
.w62 { width: 62px; }
.w72 { width: 72px; }
.vsep { width: 1px; margin: 0 0 2px 6px; background: #ccc; }
.w62 + .vsep { margin-left: 3px; }
.w56 + .vsep { margin-left: 0; }
.stack { display: flex; flex-direction: column; padding-right: 1px; }
.big + .stack { padding-left: 3px; padding-right: 7px; }
.small { display: flex; align-items: center; gap: 5px; height: 24px; white-space: nowrap; }
.small .caret { margin-left: 1px; }
.next { padding-left: 10px; padding-right: 0; }
.fx { height: 32px; font: italic bold 34px/28px "Liberation Serif", serif; }
.fx sub { font-size: 22px; line-height: 8px; vertical-align: -4px; }
.boxed { display: flex; align-items: center; justify-content: center; gap: 6px; width: 24px; height: 22px; margin: 1px 2px 0 6px; border: 1px solid #ccc; background: #f6f6f6; }
.boxed.wide { width: 35px; margin: 1px 2px 0 3px; }

/* Docked browsers */
.work { display: flex; flex: 1; min-height: 0; }
.sidebar { display: flex; flex-direction: column; flex: none; width: 276px; padding-right: 3px; background: #f0f0f0; border-right: 2px solid #777; }
.dock { display: flex; flex-direction: column; min-height: 0; padding-left: 1px; }
.model { flex: 1; padding-top: 5px; padding-bottom: 3px; border-bottom: 1px solid #a0a0a0; }
.ilogic { flex: 0 0 208px; padding-top: 5px; }
.grip { display: flex; align-items: center; gap: 5px; padding: 0 3px 0 1px; margin-bottom: 5px; height: 6px; }
.grip span { flex: 1; height: 6px; border: 1px solid #999; border-left: 0; border-top-color: #fff; background: linear-gradient(#999 1px, #fff 1px, #fff 2px, #f0f0f0 2px); }
.dock-title {
    display: flex;
    align-items: center;
    justify-content: space-between;
    height: 21px;
    padding: 0 3px 2px 9px;
    color: #fff;
    font-weight: bold;
    background: #a9a9a9;
}
.browser-menu { display: flex; align-items: center; gap: 4px; font-size: 15px; }
.small-title { flex: none; height: 20px; padding: 0 3px 0 6px; background: #a0a0a0; }
.tools { display: flex; align-items: center; gap: 8px; height: 27px; padding: 0 4px 4px; }
.tools span { width: 1px; height: 18px; background: #888; }
.tree { flex: 1; min-height: 0; padding-top: 1px; overflow: hidden; background: #fff; border: 1px solid #666; }
.tree li { display: flex; align-items: center; gap: 2px; height: 18px; padding-left: 8px; }
.tree .root { padding-left: 5px; gap: 3px; }
.twig {
    display: flex;
    align-items: center;
    width: 14px;
    height: 18px;
    background:
        linear-gradient(#808080, #808080) 0 0 / 1px 100% no-repeat,
        linear-gradient(#808080, #808080) 0 9px / 12px 1px no-repeat;
}
.last .twig { background-size: 1px 9px, 12px 1px; }
.twig button { margin-left: -4px; }
.rule-tabs { display: flex; align-items: flex-end; height: 23px; padding: 2px 0 0 2px; }
.rule-tabs button { height: 19px; padding: 2px 4px 0; border: 1px solid #8a8a94; border-left-color: #fff; border-bottom: 0; background: linear-gradient(#f4f4f4, #d4d4d4); }
.rule-tabs button:nth-child(2) { padding-right: 12px; }
.rule-tabs .on { height: 21px; padding: 0 13px 0 7px; border-left-color: #8a8a94; background: #fff; }
.rule-page { flex: 1; min-height: 0; margin: 0 4px 0 2px; padding: 3px 3px 0 5px; border: 1px solid #8a8a94; border-bottom: 0; background: #fff; }
.rules { height: 100%; padding-left: 4px; border: 1px solid #8a8a94; border-bottom: 0; }
.rules li { display: flex; align-items: center; gap: 5px; height: 18px; }

/* Graphics window */
.viewport { flex: 1; min-width: 0; background: linear-gradient(#a2a2a2, #d0d0d0); border-top: 1px solid #8a8a8a; }
.scene { width: 100%; height: 100%; }
.dim path { fill: none; stroke: #0a0a0a; stroke-width: 1; }
.dim-text { font-size: 12px; text-anchor: middle; fill: #2c2c2c; }
.edge { fill: none; stroke: #0000c0; stroke-width: 2; }
.work-axis { fill: none; stroke: #ff8412; stroke-width: 1; }
.dim-text .z { fill: #4444ee; }
.dim-text .y { fill: #22e022; }
.dim-text .x { fill: #f03030; }
```
